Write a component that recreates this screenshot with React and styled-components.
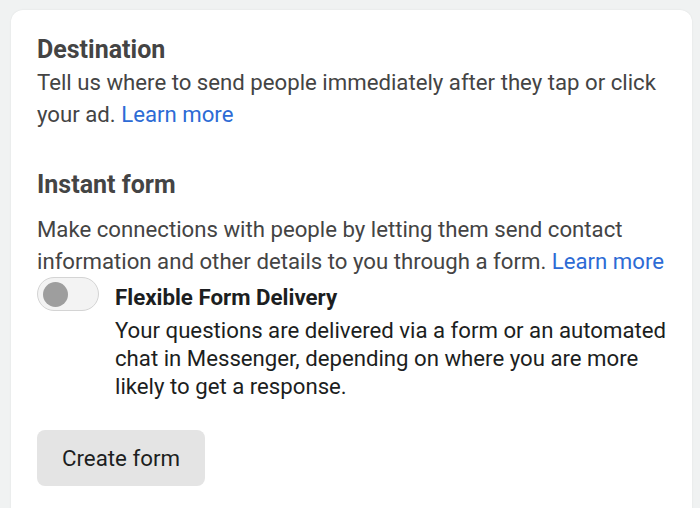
import styled, { createGlobalStyle } from "styled-components";

const GlobalStyle = createGlobalStyle`
  html, body {
    margin: 0;
    padding: 0;
    background: #f0f2f2;
    font-family: Roboto, "Liberation Sans", Arial, sans-serif;
    -webkit-font-smoothing: antialiased;
  }
`;

/* PAGE */
const Page = styled.div`
  padding: 10px 8px 0 11px;
  height: 508px;
  box-sizing: border-box;
  overflow: hidden;
`;

/* CARD */
const Card = styled.section`
  background: #ffffff;
  border-radius: 12px 12px 0 0;
  padding: 26px 12px 60px 26px;
  box-shadow: 0 0 2px rgba(0, 0, 0, 0.08);
  min-height: 520px;
  box-sizing: border-box;
`;

const Title = styled.h2`
  margin: ${(p) => p.$top || 0}px 0 0;
  font-size: 25px;
  line-height: 28px;
  font-weight: 700;
  color: #444444;
`;

const Text = styled.p`
  margin: ${(p) => p.$top || 0}px 0 0;
  max-width: 640px;
  font-size: 22.2px;
  line-height: 32px;
  color: #444444;
`;

const Link = styled.a`
  color: #2d6bd5;
  text-decoration: none;
  white-space: nowrap;
`;

/* TOGGLE */
const OptionRow = styled.div`
  display: flex;
  align-items: flex-start;
  gap: 16px;
`;

const Track = styled.div`
  flex: none;
  width: 62px;
  height: 34px;
  box-sizing: border-box;
  border: 1.5px solid #d4d4d4;
  border-radius: 17px;
  background: #f3f3f3;
  display: flex;
  align-items: center;
  padding-left: 5px;
`;

const Knob = styled.div`
  width: 25px;
  height: 25px;
  border-radius: 50%;
  background: #9e9e9e;
`;

const OptionBody = styled.div`
  padding-top: 6px;
  max-width: 558px;
`;

const OptionTitle = styled.div`
  font-size: 22.3px;
  line-height: 28px;
  font-weight: 700;
  color: #1c1e21;
`;

const OptionText = styled.p`
  margin: 5px 0 0;
  font-size: 22.2px;
  line-height: 28px;
  color: #1c1e21;
`;

/* BUTTON */
const Button = styled.button`
  margin-top: 30px;
  width: 168px;
  height: 56px;
  border: none;
  border-radius: 8px;
  background: #e4e4e4;
  font-family: inherit;
  font-size: 22.3px;
  color: #1c1e21;
  cursor: pointer;
`;

export default function App() {
  return (
    <>
      <GlobalStyle />
      <Page>
        <Card>
          <Title>Destination</Title>
          <Text $top={2}>
            Tell us where to send people immediately after they tap or click
            your ad. <Link href="#">Learn more</Link>
          </Text>

          <Title $top={41}>Instant form</Title>
          <Text $top={14}>
            Make connections with people by letting them send contact
            information and other details to you through a form.{" "}
            <Link href="#">Learn more</Link>
          </Text>

          <OptionRow>
            <Track>
              <Knob />
            </Track>
            <OptionBody>
              <OptionTitle>Flexible Form Delivery</OptionTitle>
              <OptionText>
                Your questions are delivered via a form or an automated chat in
                Messenger, depending on where you are more likely to get a
                response.
              </OptionText>
            </OptionBody>
          </OptionRow>

          <Button>Create form</Button>
        </Card>
      </Page>
    </>
  );
}
